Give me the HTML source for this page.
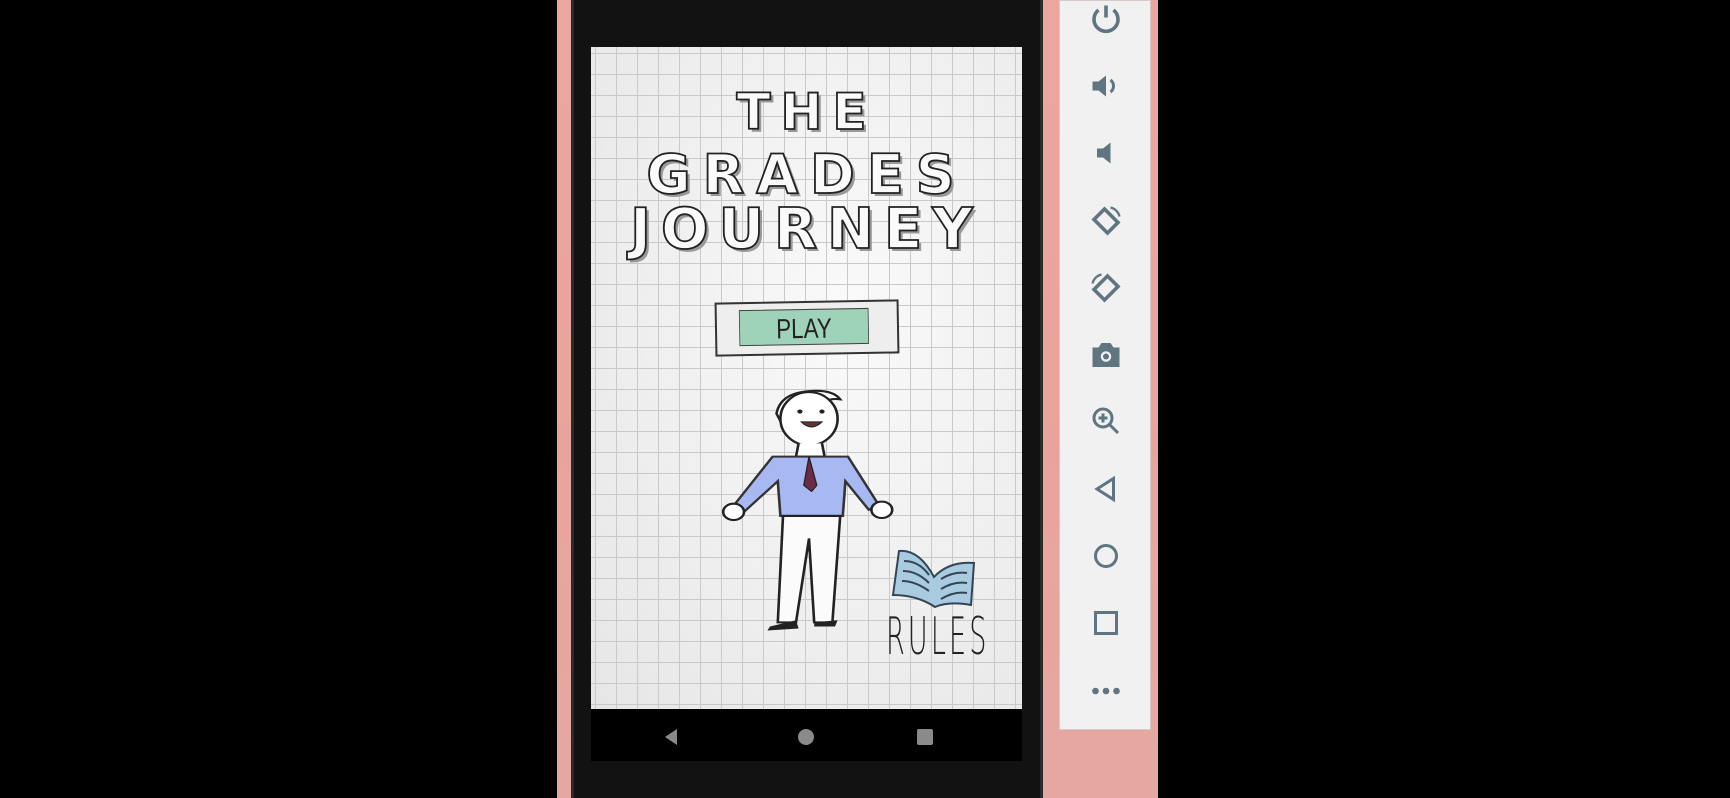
<!DOCTYPE html>
<html style="overflow:hidden;height:798px"><head><style>
*{margin:0;padding:0;box-sizing:border-box}
body{width:1730px;height:798px;background:#000;position:relative;overflow:hidden;font-family:"Liberation Sans",sans-serif}
.pink{position:absolute;left:557px;top:0;width:601px;height:798px;background:linear-gradient(180deg,#eba6a0,#e9a49c 50%,#e4a8a0)}
.phone{position:absolute;left:571px;top:-40px;width:472px;height:838px;background:#121212;border-radius:40px 40px 0 0;border:3px solid #2a2a2a;border-bottom:0}
.screen{position:absolute;left:591px;top:47px;width:431px;height:662px;background-color:#f1f1f1;
background-image:linear-gradient(#c9c9c9 1px,transparent 1px),linear-gradient(90deg,#c9c9c9 1px,transparent 1px),radial-gradient(ellipse at 60% 40%,#fafafa,#e6e6e6);
background-size:21px 21px,21px 21px,100% 100%;background-position:4px 6px,4px 6px,0 0;overflow:hidden}
.nav{position:absolute;left:591px;top:709px;width:431px;height:52px;background:#000}
.side{position:absolute;left:1059px;top:0;width:92px;height:730px;background:#f1f1f1;border:1px solid #d9c9c6}
.side svg{position:absolute;left:28px}
.t{position:absolute;left:0;width:431px;text-align:center;font-family:"DejaVu Sans",sans-serif;font-weight:bold;color:#fafafa;-webkit-text-stroke:1.8px #222;text-shadow:3px 3px 0 #999;letter-spacing:10px}
</style></head><body>
<div class="pink"></div>
<div class="phone"></div>
<div class="screen">
 <div class="t" style="top:36px;font-size:50px">THE</div>
 <div class="t" style="top:96px;font-size:54px;letter-spacing:12px">GRADES</div>
 <div class="t" style="top:150px;font-size:56px;letter-spacing:10px">JOURNEY</div>
 <div style="position:absolute;left:124px;top:254px;width:184px;height:54px;border:2px solid #333;background:#eee;transform:rotate(-1deg)">
  <div style="position:absolute;left:6px;top:6px;right:12px;bottom:8px;background:#9fd3b9;border:1px solid #444;text-align:center;font-size:28px;line-height:38px;color:#222;transform:scaleX(0.8)">PLAY</div>
 </div>
 <svg style="position:absolute;left:88px;top:338px;width:260px;height:266px" viewBox="0 0 200 260" preserveAspectRatio="none">
  <path d="M75 28 Q78 8 100 6 Q118 4 124 14 Q110 12 112 24 Q92 14 80 40Z" fill="#fff" stroke="#222" stroke-width="2"/>
  <ellipse cx="100" cy="33" rx="22" ry="26" fill="#fff" stroke="#222" stroke-width="2"/>
  <circle cx="93" cy="26" r="2" fill="#222"/><circle cx="110" cy="26" r="2" fill="#222"/>
  <path d="M94 36 Q102 46 110 36Z" fill="#633" stroke="#222"/>
  <path d="M92 57 L90 70 L112 70 L110 57" fill="#fff" stroke="#222" stroke-width="2"/>
  <path d="M72 70 L130 70 L154 118 L146 122 L128 94 L126 128 L78 128 L76 94 L50 124 L42 118Z" fill="#a7b8f3" stroke="#333" stroke-width="2"/>
  <path d="M100 70 L96 98 L102 104 L106 98Z" fill="#6d2a44" stroke="#222"/>
  <path d="M80 128 L76 232 L90 232 L100 150 L104 232 L118 232 L124 128Z" fill="#fbfbfb" stroke="#222" stroke-width="2"/>
  <path d="M70 236 L90 230 L92 238 L68 240Z M104 232 L122 230 L120 236 L104 236Z" fill="#222"/>
  <circle cx="42" cy="124" r="8" fill="#fff" stroke="#222" stroke-width="2"/>
  <circle cx="156" cy="122" r="8" fill="#fff" stroke="#222" stroke-width="2"/>
 </svg>
 <svg style="position:absolute;left:298px;top:498px" width="95" height="65" viewBox="0 0 95 65">
  <path d="M4 50 L10 6 Q30 4 45 32 Q60 16 85 18 L82 60 Q60 56 46 62 Q28 50 4 50Z" fill="#a9cbe0" stroke="#345" stroke-width="2"/>
  <path d="M15 16 Q30 16 40 30 M14 26 Q28 26 40 38 M13 36 Q26 36 40 46 M52 34 Q65 26 78 28 M52 44 Q65 36 78 38 M52 54 Q65 46 78 48" stroke="#345" stroke-width="2" fill="none"/>
 </svg>
 <div style="position:absolute;left:295px;top:560px;font-family:'DejaVu Sans',sans-serif;font-size:52px;font-weight:200;color:#222;letter-spacing:6px;transform:scaleX(0.52);transform-origin:left top">RULES</div>
</div>
<div class="nav">
 <svg width="431" height="52" style="position:absolute;left:0;top:0"><path d="M86 20 L86 36 L74 28Z" fill="#8a8a8a"/><circle cx="215" cy="28" r="8" fill="#8a8a8a"/><rect x="326" y="20" width="16" height="16" rx="2" fill="#8a8a8a"/></svg>
</div>
<div class="side">
 <svg style="top:0px" width="36" height="36" viewBox="0 0 24 24" fill="none" stroke="#5f7580" stroke-width="2.4"><path d="M12 3v8M7 6a8 8 0 1 0 10 0"/></svg>
 <svg style="top:67px" width="36" height="36" viewBox="0 0 24 24" fill="#5f7580"><path d="M3 9h4l5-4v14l-5-4H3z"/><path d="M15 8a5 5 0 0 1 0 8" stroke="#5f7580" stroke-width="2" fill="none"/></svg>
 <svg style="top:134px" width="36" height="36" viewBox="0 0 24 24" fill="#5f7580"><path d="M6 9h4l5-4v14l-5-4H6z"/></svg>
 <svg style="top:202px" width="36" height="36" viewBox="0 0 24 24" fill="none" stroke="#5f7580" stroke-width="2.4"><path d="M11 4 L20 13 L13 20 L4 11Z"/><path d="M15 3a8 8 0 0 1 6 6" stroke-width="1.5"/></svg>
 <svg style="top:269px" width="36" height="36" viewBox="0 0 24 24" fill="none" stroke="#5f7580" stroke-width="2.4"><path d="M13 4 L20 11 L11 20 L4 13Z"/><path d="M3 9a8 8 0 0 1 6-6" stroke-width="1.5"/></svg>
 <svg style="top:336px" width="36" height="36" viewBox="0 0 24 24" fill="#5f7580"><path d="M3 7h4l2-3h6l2 3h4v13H3z"/><circle cx="12" cy="13" r="3.5" fill="#f1f1f1"/><circle cx="12" cy="13" r="2" fill="#5f7580"/></svg>
 <svg style="top:402px" width="36" height="36" viewBox="0 0 24 24" fill="none" stroke="#5f7580" stroke-width="2"><circle cx="10" cy="10" r="6"/><path d="M14.5 14.5L20 20M10 7v6M7 10h6"/></svg>
 <svg style="top:470px" width="36" height="36" viewBox="0 0 24 24" fill="none" stroke="#5f7580" stroke-width="2"><path d="M17 5v14L6 12z"/></svg>
 <svg style="top:537px" width="36" height="36" viewBox="0 0 24 24" fill="none" stroke="#5f7580" stroke-width="2"><circle cx="12" cy="12" r="7"/></svg>
 <svg style="top:604px" width="36" height="36" viewBox="0 0 24 24" fill="none" stroke="#5f7580" stroke-width="2"><rect x="5" y="5" width="14" height="14"/></svg>
 <svg style="top:672px" width="36" height="36" viewBox="0 0 24 24" fill="#5f7580"><circle cx="5" cy="12" r="2.2"/><circle cx="12" cy="12" r="2.2"/><circle cx="19" cy="12" r="2.2"/></svg>
</div>
</body></html>
